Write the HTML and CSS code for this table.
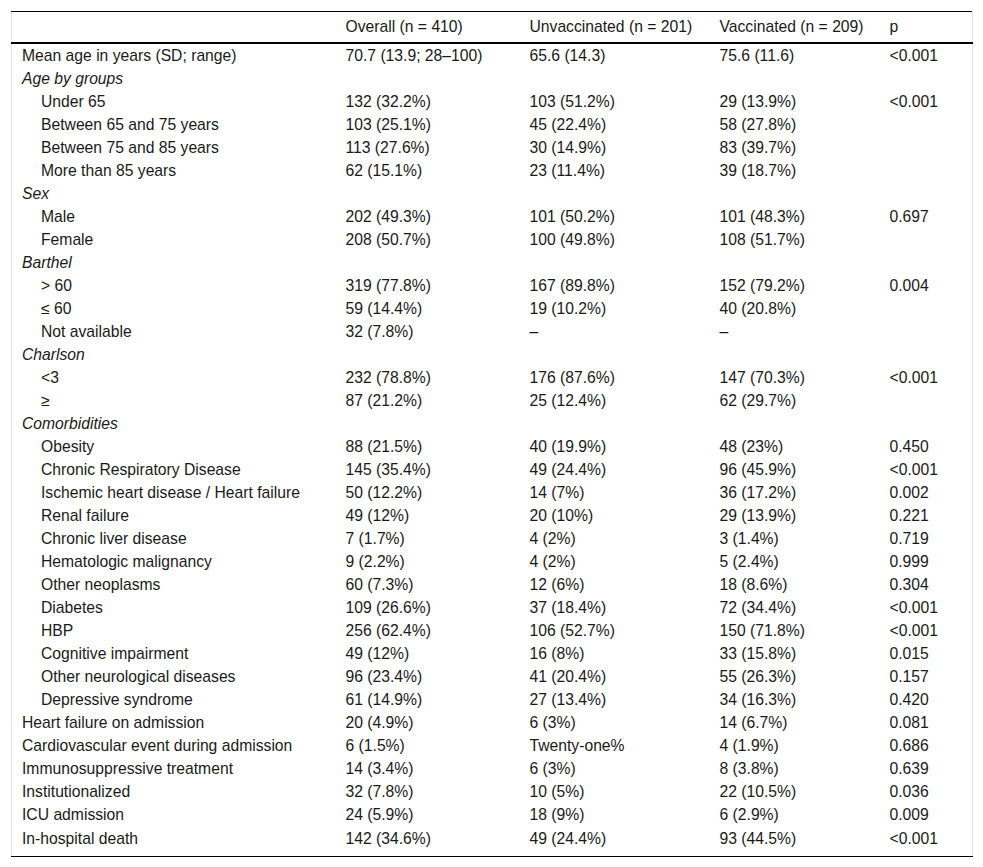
FILE: index.html
```html
<!DOCTYPE html>
<html>
<head>
<meta charset="utf-8">
<link rel="stylesheet" href="styles.css">
</head>
<body>
<div class="wrap">
<table class="tbl">
<colgroup>
<col class="c1"><col class="c2"><col class="c3"><col class="c4"><col class="c5">
</colgroup>
<thead>
<tr><th></th><th>Overall (n = 410)</th><th>Unvaccinated (n = 201)</th><th>Vaccinated (n = 209)</th><th>p</th></tr>
</thead>
<tbody>
<tr><td>Mean age in years (SD; range)</td><td>70.7 (13.9; 28–100)</td><td>65.6 (14.3)</td><td>75.6 (11.6)</td><td>&lt;0.001</td></tr>
<tr><td class="grp">Age by groups</td><td></td><td></td><td></td><td></td></tr>
<tr><td class="sub">Under 65</td><td>132 (32.2%)</td><td>103 (51.2%)</td><td>29 (13.9%)</td><td>&lt;0.001</td></tr>
<tr><td class="sub">Between 65 and 75 years</td><td>103 (25.1%)</td><td>45 (22.4%)</td><td>58 (27.8%)</td><td></td></tr>
<tr><td class="sub">Between 75 and 85 years</td><td>113 (27.6%)</td><td>30 (14.9%)</td><td>83 (39.7%)</td><td></td></tr>
<tr><td class="sub">More than 85 years</td><td>62 (15.1%)</td><td>23 (11.4%)</td><td>39 (18.7%)</td><td></td></tr>
<tr><td class="grp">Sex</td><td></td><td></td><td></td><td></td></tr>
<tr><td class="sub">Male</td><td>202 (49.3%)</td><td>101 (50.2%)</td><td>101 (48.3%)</td><td>0.697</td></tr>
<tr><td class="sub">Female</td><td>208 (50.7%)</td><td>100 (49.8%)</td><td>108 (51.7%)</td><td></td></tr>
<tr><td class="grp">Barthel</td><td></td><td></td><td></td><td></td></tr>
<tr><td class="sub">&gt; 60</td><td>319 (77.8%)</td><td>167 (89.8%)</td><td>152 (79.2%)</td><td>0.004</td></tr>
<tr><td class="sub">≤ 60</td><td>59 (14.4%)</td><td>19 (10.2%)</td><td>40 (20.8%)</td><td></td></tr>
<tr><td class="sub">Not available</td><td>32 (7.8%)</td><td>–</td><td>–</td><td></td></tr>
<tr><td class="grp">Charlson</td><td></td><td></td><td></td><td></td></tr>
<tr><td class="sub">&lt;3</td><td>232 (78.8%)</td><td>176 (87.6%)</td><td>147 (70.3%)</td><td>&lt;0.001</td></tr>
<tr><td class="sub">≥</td><td>87 (21.2%)</td><td>25 (12.4%)</td><td>62 (29.7%)</td><td></td></tr>
<tr><td class="grp">Comorbidities</td><td></td><td></td><td></td><td></td></tr>
<tr><td class="sub">Obesity</td><td>88 (21.5%)</td><td>40 (19.9%)</td><td>48 (23%)</td><td>0.450</td></tr>
<tr><td class="sub">Chronic Respiratory Disease</td><td>145 (35.4%)</td><td>49 (24.4%)</td><td>96 (45.9%)</td><td>&lt;0.001</td></tr>
<tr><td class="sub">Ischemic heart disease / Heart failure</td><td>50 (12.2%)</td><td>14 (7%)</td><td>36 (17.2%)</td><td>0.002</td></tr>
<tr><td class="sub">Renal failure</td><td>49 (12%)</td><td>20 (10%)</td><td>29 (13.9%)</td><td>0.221</td></tr>
<tr><td class="sub">Chronic liver disease</td><td>7 (1.7%)</td><td>4 (2%)</td><td>3 (1.4%)</td><td>0.719</td></tr>
<tr><td class="sub">Hematologic malignancy</td><td>9 (2.2%)</td><td>4 (2%)</td><td>5 (2.4%)</td><td>0.999</td></tr>
<tr><td class="sub">Other neoplasms</td><td>60 (7.3%)</td><td>12 (6%)</td><td>18 (8.6%)</td><td>0.304</td></tr>
<tr><td class="sub">Diabetes</td><td>109 (26.6%)</td><td>37 (18.4%)</td><td>72 (34.4%)</td><td>&lt;0.001</td></tr>
<tr><td class="sub">HBP</td><td>256 (62.4%)</td><td>106 (52.7%)</td><td>150 (71.8%)</td><td>&lt;0.001</td></tr>
<tr><td class="sub">Cognitive impairment</td><td>49 (12%)</td><td>16 (8%)</td><td>33 (15.8%)</td><td>0.015</td></tr>
<tr><td class="sub">Other neurological diseases</td><td>96 (23.4%)</td><td>41 (20.4%)</td><td>55 (26.3%)</td><td>0.157</td></tr>
<tr><td class="sub">Depressive syndrome</td><td>61 (14.9%)</td><td>27 (13.4%)</td><td>34 (16.3%)</td><td>0.420</td></tr>
<tr><td>Heart failure on admission</td><td>20 (4.9%)</td><td>6 (3%)</td><td>14 (6.7%)</td><td>0.081</td></tr>
<tr><td>Cardiovascular event during admission</td><td>6 (1.5%)</td><td>Twenty-one%</td><td>4 (1.9%)</td><td>0.686</td></tr>
<tr><td>Immunosuppressive treatment</td><td>14 (3.4%)</td><td>6 (3%)</td><td>8 (3.8%)</td><td>0.639</td></tr>
<tr><td>Institutionalized</td><td>32 (7.8%)</td><td>10 (5%)</td><td>22 (10.5%)</td><td>0.036</td></tr>
<tr><td>ICU admission</td><td>24 (5.9%)</td><td>18 (9%)</td><td>6 (2.9%)</td><td>0.009</td></tr>
<tr class="last"><td>In-hospital death</td><td>142 (34.6%)</td><td>49 (24.4%)</td><td>93 (44.5%)</td><td>&lt;0.001</td></tr>
</tbody>
</table>
</div>
</body>
</html>
```
FILE: styles.css
```css
html, body {
  margin: 0;
  padding: 0;
  background: #fff;
}
body {
  font-family: "Liberation Sans", Arial, sans-serif;
  font-size: 15.7px;
  color: #1a1a1a;
}
.wrap {
  padding: 11px 0 0 11px;
}
.tbl {
  width: 962px;
  border-collapse: collapse;
  table-layout: fixed;
  border-left: 1px solid #e6e6e6;
  border-right: 1px solid #e6e6e6;
  border-top: 1px solid #000;
  border-bottom: 1px solid #000;
}
.c1 { width: 324px; }
.c2 { width: 184px; }
.c3 { width: 190px; }
.c4 { width: 170px; }
.c5 { width: 93px; }
.tbl th {
  font-weight: normal;
  text-align: left;
  height: 30px;
  padding: 0 10px;
  border-bottom: 2px solid #000;
  white-space: nowrap;
  line-height: 18px;
}
.tbl td {
  height: 23px;
  padding: 0 10px;
  white-space: nowrap;
  vertical-align: middle;
  line-height: 18px;
}
.tbl td.grp {
  font-style: italic;
}
.tbl td.sub {
  padding-left: 29px;
}
.tbl tr.last td {
  height: 26px;
  vertical-align: top;
  padding-top: 4px;
}
```
